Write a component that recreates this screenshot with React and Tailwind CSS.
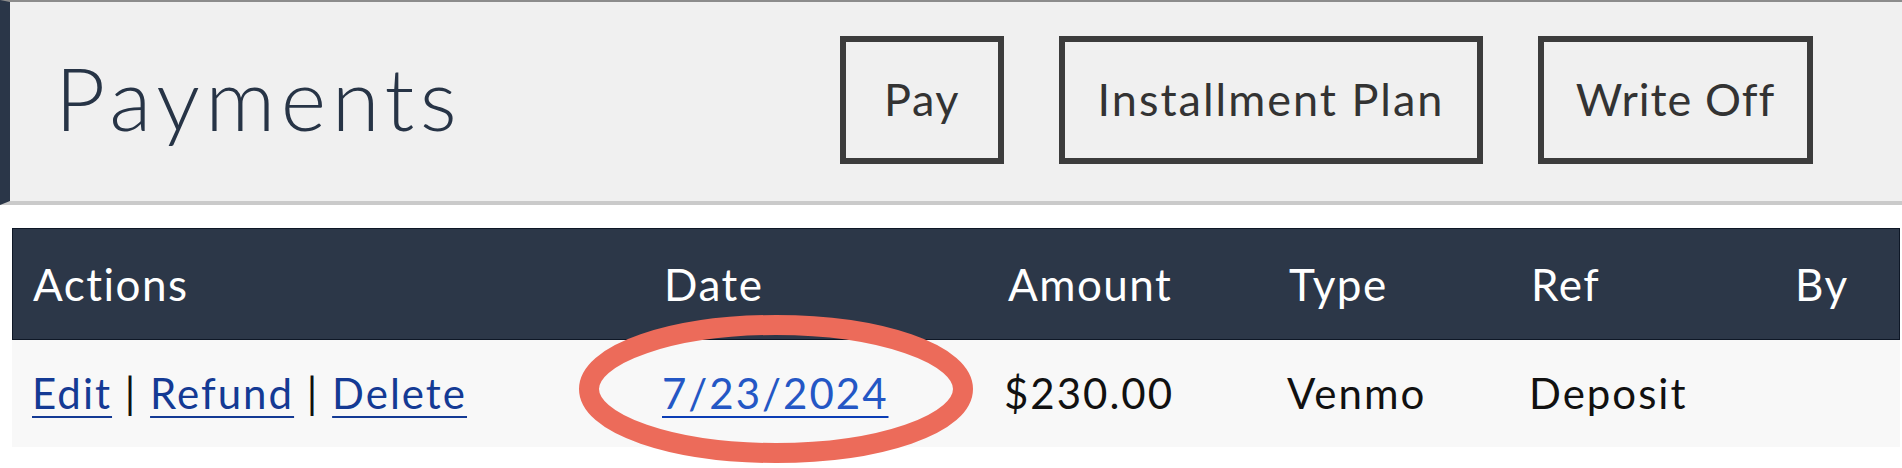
import React from 'react';

const actions = ['Edit', 'Refund', 'Delete'];
const columns = ['Actions', 'Date', 'Amount', 'Type', 'Ref', 'By'];

export default function App() {
  return (
    <div className="relative w-[1902px] h-[468px] overflow-hidden bg-white font-[Lato,sans-serif]">
      <header className="flex items-start h-[205px] bg-[#f0f0f0] border-t-2 border-t-[#8c8c8c] border-l-[10px] border-l-[#2a3648] border-b-4 border-b-[#cacaca]">
        <h1 className="mt-[52px] pl-[45px] text-[87px] leading-none font-light tracking-[5.5px] text-[#273446]">Payments</h1>
        <div className="ml-auto mr-[89px] mt-[34px] flex gap-[55px]">
          <button className="w-[164px] h-[128px] flex items-center justify-center border-[6px] border-[#3c3c3c] text-[45px] tracking-[1.5px] text-[#333]">Pay</button>
          <button className="w-[424px] h-[128px] flex items-center justify-center border-[6px] border-[#3c3c3c] text-[45px] tracking-[2px] text-[#333]">Installment Plan</button>
          <button className="w-[275px] h-[128px] flex items-center justify-center border-[6px] border-[#3c3c3c] text-[45px] tracking-[1px] text-[#333]">Write Off</button>
        </div>
      </header>

      <div className="mt-[23px] ml-[12px] mr-[2px]">
        <div className="grid grid-cols-[631px_344px_281px_242px_264px_1fr] items-center h-[112px] bg-[#2c3748] border border-[#0e1726] text-white text-[44px] tracking-[1.5px]">
          {columns.map(c => (
            <div key={c} className="pl-[20px]">{c}</div>
          ))}
        </div>
        <div className="grid grid-cols-[631px_344px_281px_242px_264px_1fr] items-center h-[107px] bg-[#f8f8f8] border border-transparent text-[#111] text-[42px] tracking-[2px]">
          <div className="pl-[19px]">
            {actions.map((a, i) => (
              <span key={a}>
                {i > 0 && <span className="text-[#111]"> | </span>}
                <a href="#" className="text-[#143a94] underline decoration-2 underline-offset-[7px]">{a}</a>
              </span>
            ))}
          </div>
          <div className="pl-[18px]">
            <a href="#" className="text-[#2457c5] underline decoration-2 decoration-[#0b3db5] underline-offset-[7px]">7/23/2024</a>
          </div>
          <div className="pl-[16px]">$230.00</div>
          <div className="pl-[18px]">Venmo</div>
          <div className="pl-[18px]">Deposit</div>
          <div className="pl-[20px]"></div>
        </div>
      </div>

      {/* annotation circle around the date */}
      <svg className="absolute inset-0 pointer-events-none" width="1902" height="468">
        <ellipse cx="776" cy="389" rx="187" ry="64" fill="none" stroke="#ec6b5a" strokeWidth="20" />
      </svg>
    </div>
  );
}
